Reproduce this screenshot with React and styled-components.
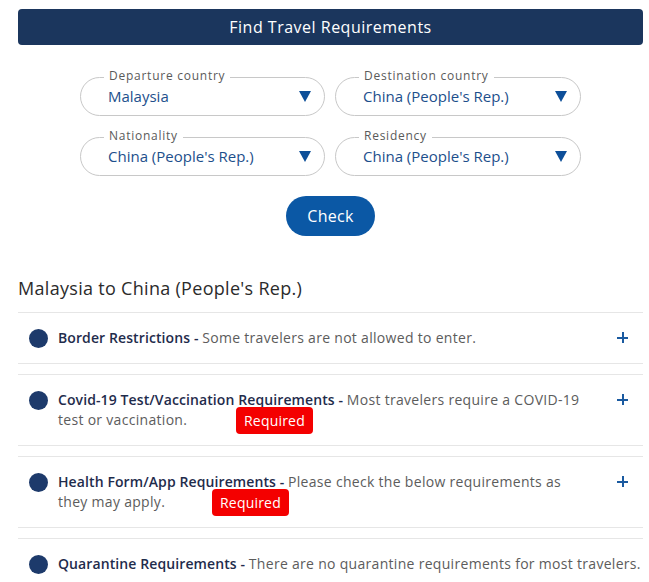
import styled, { createGlobalStyle } from 'styled-components';

const GlobalStyle = createGlobalStyle`
  body {
    margin: 0;
    background: #fff;
    font-family: "Open Sans", "Liberation Sans", sans-serif;
  }
`;

const Page = styled.div`
  padding: 9px 6px 0 18px;
`;

const TitleBar = styled.div`
  height: 36px;
  border-radius: 4px;
  background: #1b365d;
  color: #fff;
  font-size: 16px;
  letter-spacing: 0.5px;
  display: flex;
  align-items: center;
  justify-content: center;
`;

const Form = styled.div`
  width: 501px;
  margin: 32px auto 0;
  display: grid;
  grid-template-columns: 245px 246px;
  column-gap: 10px;
  row-gap: 21px;
`;

const Field = styled.div`
  position: relative;
  height: 39px;
  border: 1px solid #c8c8c8;
  border-radius: 20px;
  box-sizing: border-box;
  display: flex;
  align-items: center;
  padding: 0 13px 0 27px;
`;

const Label = styled.span`
  position: absolute;
  top: -10px;
  left: 23px;
  padding: 0 5px;
  background: #fff;
  font-size: 12px;
  line-height: 16px;
  letter-spacing: 0.75px;
  color: #5a5a5a;
`;

const Value = styled.span`
  flex: 1;
  font-size: 15px;
  color: #1d4f8c;
  margin-top: -1px;
`;

const Arrow = styled.span`
  width: 0;
  height: 0;
  border-left: 6px solid transparent;
  border-right: 6px solid transparent;
  border-top: 11px solid #0d4f99;
`;

const ButtonRow = styled.div`
  display: flex;
  justify-content: center;
  margin-top: 20px;
`;

const CheckButton = styled.button`
  width: 89px;
  height: 40px;
  border: none;
  border-radius: 20px;
  background: #0b58a5;
  color: #fff;
  font-family: inherit;
  font-size: 16px;
  letter-spacing: 0.3px;
`;

const Heading = styled.h2`
  margin: 40px 0 12px;
  font-size: 18px;
  font-weight: 400;
  line-height: 24px;
  letter-spacing: 0.3px;
  color: #2b2b2b;
`;

const List = styled.div`
  display: flex;
  flex-direction: column;
  gap: 10px;
`;

const Item = styled.div`
  position: relative;
  border-top: 1px solid #e6e6e6;
  border-bottom: 1px solid #e6e6e6;
  padding: 15px 15px 15px 11px;
  display: flex;
  align-items: flex-start;
`;

const Bullet = styled.span`
  flex: none;
  width: 19px;
  height: 19px;
  margin-top: 1px;
  border-radius: 50%;
  background: #1d3a6b;
`;

const Text = styled.p`
  flex: 1;
  margin: 0 0 0 10px;
  padding-right: ${(p) => (p.$wide ? '0' : '30px')};
  font-size: 14px;
  line-height: 20px;
  letter-spacing: 0.3px;
  color: #5c5c5c;
  white-space: ${(p) => (p.$wide ? 'nowrap' : 'normal')};
`;

const Title = styled.span`
  font-weight: 600;
  letter-spacing: 0.1px;
  color: #1f2c4c;
`;

const Plus = styled.span`
  flex: none;
  position: relative;
  width: 11px;
  height: 11px;
  margin-top: 4px;

  &::before,
  &::after {
    content: '';
    position: absolute;
    background: #1a5aa0;
  }
  &::before {
    left: 0;
    right: 0;
    top: 4.5px;
    height: 2px;
  }
  &::after {
    top: 0;
    bottom: 0;
    left: 4.5px;
    width: 2px;
  }
`;

const Badge = styled.span`
  position: absolute;
  top: 32px;
  left: ${(p) => p.$left}px;
  height: 27px;
  padding: 0 8px;
  border-radius: 4px;
  background: #f40000;
  color: #fff;
  font-size: 14px;
  letter-spacing: 0.2px;
  display: flex;
  align-items: center;
`;

const fields = [
  { label: 'Departure country', value: 'Malaysia' },
  { label: 'Destination country', value: "China (People's Rep.)" },
  { label: 'Nationality', value: "China (People's Rep.)" },
  { label: 'Residency', value: "China (People's Rep.)" },
];

const items = [
  { title: 'Border Restrictions', text: 'Some travelers are not allowed to enter.' },
  {
    title: 'Covid-19 Test/Vaccination Requirements',
    text: 'Most travelers require a COVID-19 test or vaccination.',
    badge: 218,
  },
  {
    title: 'Health Form/App Requirements',
    text: 'Please check the below requirements as they may apply.',
    badge: 194,
  },
  {
    title: 'Quarantine Requirements',
    text: 'There are no quarantine requirements for most travelers.',
    wide: true,
  },
];

export default function App() {
  return (
    <Page>
      <GlobalStyle />
      <TitleBar>Find Travel Requirements</TitleBar>
      <Form>
        {fields.map((f) => (
          <Field key={f.label}>
            <Label>{f.label}</Label>
            <Value>{f.value}</Value>
            <Arrow />
          </Field>
        ))}
      </Form>
      <ButtonRow>
        <CheckButton>Check</CheckButton>
      </ButtonRow>
      <Heading>Malaysia to China (People's Rep.)</Heading>
      <List>
        {items.map((it) => (
          <Item key={it.title}>
            <Bullet />
            <Text $wide={it.wide}>
              <Title>{it.title} - </Title>
              {it.text}
            </Text>
            {!it.wide && <Plus />}
            {it.badge && <Badge $left={it.badge}>Required</Badge>}
          </Item>
        ))}
      </List>
    </Page>
  );
}
